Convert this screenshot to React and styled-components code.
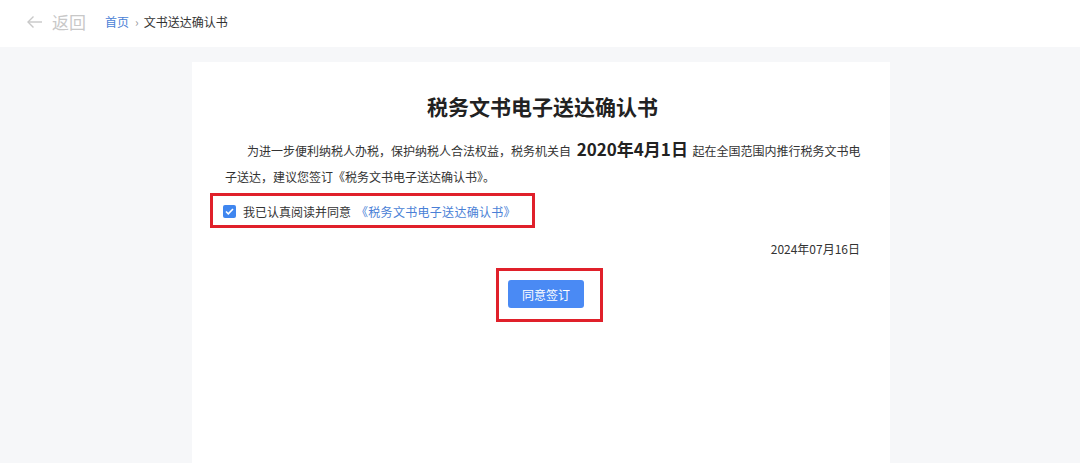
import React from 'react'
import styled, { createGlobalStyle } from 'styled-components'

const GlobalStyle = createGlobalStyle`
  html, body {
    margin: 0;
    padding: 0;
    background: #f6f7f9;
    font-family: "Microsoft YaHei", "Noto Sans CJK SC", "Noto Sans", sans-serif;
  }
`

const App = () => {
  return (
    <>
      <GlobalStyle />
      <Header>
        <Back>
          <svg width="17" height="14" viewBox="0 0 17 14" fill="none" stroke="#c8c8c8" strokeWidth="1.4">
            <path d="M16 7H2" />
            <path d="M7.5 1.5L2 7l5.5 5.5" />
          </svg>
          <BackText>返回</BackText>
        </Back>
        <Crumbs>
          <CrumbLink>首页</CrumbLink>
          <Sep>›</Sep>
          <Crumb>文书送达确认书</Crumb>
        </Crumbs>
      </Header>
      <Main>
        <Card>
          <Title>税务文书电子送达确认书</Title>
          <Para>
            为进一步便利纳税人办税，保护纳税人合法权益，税务机关自 <Strong>2020年4月1日</Strong> 起在全国范围内推行税务文书电子送达，建议您签订《税务文书电子送达确认书》。
          </Para>
          <Highlight>
            <Agree>
              <Check>
                <svg width="9" height="7" viewBox="0 0 9 7" fill="none" stroke="#fff" strokeWidth="1.6">
                  <path d="M1 3.5l2.3 2.3L8 1" />
                </svg>
              </Check>
              <span>我已认真阅读并同意</span>
              <DocLink>《税务文书电子送达确认书》</DocLink>
            </Agree>
          </Highlight>
          <DateRow>2024年07月16日</DateRow>
          <ButtonRow>
            <ButtonFrame>
              <SignButton>同意签订</SignButton>
            </ButtonFrame>
          </ButtonRow>
        </Card>
      </Main>
    </>
  )
}

export default App

const Header = styled.div`
  height: 47px;
  background: #fff;
  display: flex;
  align-items: center;
  padding: 0 0 4px 26px;
  box-sizing: border-box;
`

const Back = styled.div`
  display: flex;
  align-items: center;
  gap: 9px;
  margin-right: 19px;
`

const BackText = styled.span`
  font-size: 17px;
  color: #c8c8c8;
`

const Crumbs = styled.div`
  display: flex;
  align-items: center;
  font-size: 12px;
`

const CrumbLink = styled.span`
  color: #4a7fd6;
`

const Sep = styled.span`
  color: #999;
  margin: 0 5px 0 6px;
  font-size: 12px;
`

const Crumb = styled.span`
  color: #333;
`

const Main = styled.div`
  display: flex;
  justify-content: center;
  padding-top: 15px;
  padding-left: 2px;
`

const Card = styled.div`
  width: 698px;
  min-height: 420px;
  background: #fff;
  box-sizing: border-box;
  padding: 29px 26px 0 33px;
`

const Title = styled.h1`
  margin: 0;
  text-align: center;
  font-size: 21px;
  font-weight: bold;
  color: #222;
  line-height: 30px;
  padding-right: 4px;
`

const Para = styled.p`
  margin: 17px 0 0;
  font-size: 12px;
  line-height: 26px;
  color: #333;
  text-indent: 22px;
`

const Strong = styled.b`
  font-size: 17px;
  line-height: 16px;
  color: #222;
  margin: 0 2px 0 3px;
`

const Highlight = styled.div`
  display: inline-block;
  margin: 3px 0 0 -15px;
  border: 3px solid #e0202a;
  padding: 7px 16px 6px 10px;
`

const Agree = styled.div`
  display: flex;
  align-items: center;
  font-size: 12px;
  color: #333;
  height: 16px;
`

const Check = styled.span`
  width: 13px;
  height: 13px;
  border-radius: 2px;
  background: #3f86ef;
  display: flex;
  align-items: center;
  justify-content: center;
  margin-right: 7px;
`

const DocLink = styled.span`
  color: #4a7fd6;
  margin-left: 5px;
  letter-spacing: 0.3px;
`

const DateRow = styled.div`
  text-align: right;
  font-size: 12px;
  color: #333;
  margin: 13px 4px 0 0;
  line-height: 16px;
`

const ButtonRow = styled.div`
  display: flex;
  justify-content: center;
  margin-top: 11px;
  padding-left: 10px;
`

const ButtonFrame = styled.div`
  border: 3px solid #e0202a;
  padding: 9px 16px 11px 9px;
`

const SignButton = styled.button`
  width: 76px;
  height: 28px;
  border: none;
  border-radius: 3px;
  background: #4a8af4;
  color: #fff;
  font-size: 12px;
  font-family: inherit;
`
